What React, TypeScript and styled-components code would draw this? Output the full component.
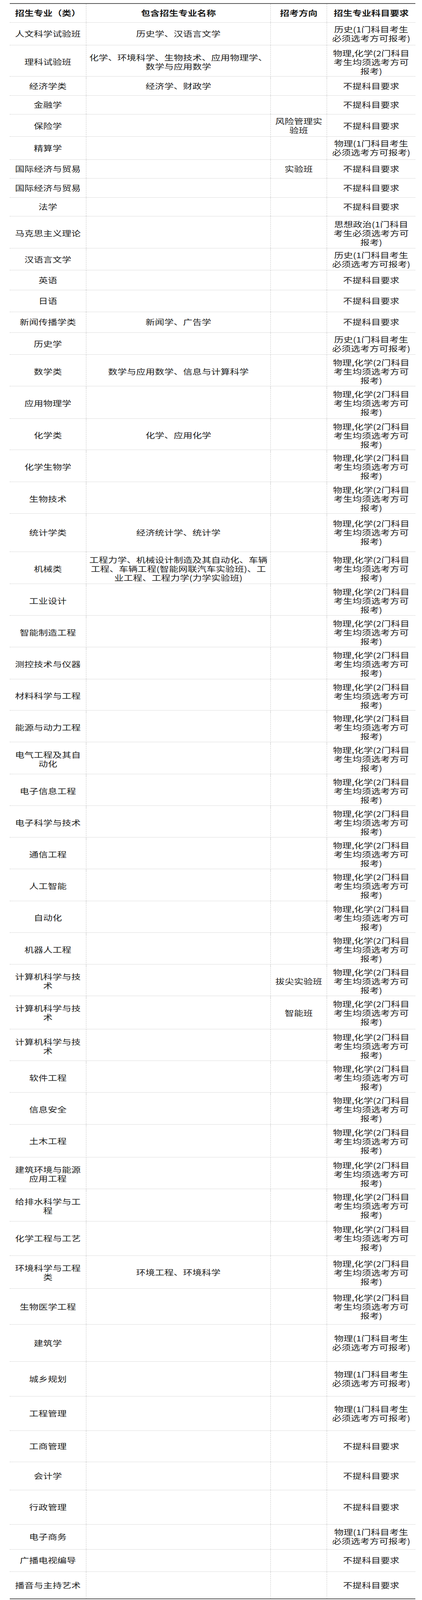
import React from 'react'
import styled, { createGlobalStyle } from 'styled-components'

const GlobalStyle = createGlobalStyle`
  html, body {
    margin: 0;
    padding: 0;
    background: #fff;
  }
  body {
    font-family: "Noto Sans CJK SC", "Noto Sans", sans-serif;
    color: #222;
  }
`

const Page = styled.div`
  padding: 8px 17px 0 25px;
`

const Sheet = styled.div`
  width: 1038px;
  border-top: 2px solid #555;
  border-bottom: 2px solid #555;
  font-size: 24px;
  line-height: 1.2;
  text-align: center;
`

const Row = styled.div<{ $h: number }>`
  display: grid;
  grid-template-columns: 195px 472px 144px 227px;
  height: ${p => p.$h}px;
  box-sizing: border-box;
  border-bottom: 1px dotted #bdbdbd;
  &:last-child {
    border-bottom: none;
  }
`

const Cell = styled.div<{ $head?: boolean }>`
  display: flex;
  align-items: center;
  justify-content: center;
  min-width: 0;
  padding: 0 8px;
  word-break: break-all;
  font-weight: ${p => (p.$head ? 700 : 400)};
  color: ${p => (p.$head ? '#1a1a1a' : '#222')};
  &:not(:first-child) {
    border-left: 1px dashed #c4c4c4;
  }
  &:nth-child(2) {
    padding: 0 6px;
  }
  &:nth-child(4) {
    padding: 0 11px;
  }
`

/* the sheet is printed a little flattened, glyphs included */
const Text = styled.span`
  display: inline-block;
  transform: scaleY(0.8);
`

const NONE = '不提科目要求'
const HIST = '历史(1门科目考生必须选考方可报考)'
const PHY = '物理(1门科目考生必须选考方可报考)'
const PC = '物理,化学(2门科目考生均须选考方可报考)'
const POL = '思想政治(1门科目考生必须选考方可报考)'

type Major = [string, string, string, string, number]

const majors: Major[] = [
  ['人文科学试验班', '历史学、汉语言文学', '', HIST, 57.6],
  ['理科试验班', '化学、环境科学、生物技术、应用物理学、数学与应用数学', '', PC, 80.8],
  ['经济学类', '经济学、财政学', '', NONE, 48.8],
  ['金融学', '', '', NONE, 48],
  ['保险学', '', '风险管理实验班', NONE, 56.8],
  ['精算学', '', '', PHY, 59.2],
  ['国际经济与贸易', '', '实验班', NONE, 48],
  ['国际经济与贸易', '', '', NONE, 48.8],
  ['法学', '', '', NONE, 48],
  ['马克思主义理论', '', '', POL, 81.6],
  ['汉语言文学', '', '', HIST, 56.8],
  ['英语', '', '', NONE, 50.4],
  ['日语', '', '', NONE, 56],
  ['新闻传播学类', '新闻学、广告学', '', NONE, 52.8],
  ['历史学', '', '', HIST, 56.8],
  ['数学类', '数学与应用数学、信息与计算科学', '', PC, 80.8],
  ['应用物理学', '', '', PC, 82.4],
  ['化学类', '化学、应用化学', '', PC, 80.8],
  ['化学生物学', '', '', PC, 81.6],
  ['生物技术', '', '', PC, 80.8],
  ['统计学类', '经济统计学、统计学', '', PC, 98.4],
  ['机械类', '工程力学、机械设计制造及其自动化、车辆工程、车辆工程(智能网联汽车实验班)、工业工程、工程力学(力学实验班)', '', PC, 81.6],
  ['工业设计', '', '', PC, 81.6],
  ['智能制造工程', '', '', PC, 80.8],
  ['测控技术与仪器', '', '', PC, 81.6],
  ['材料科学与工程', '', '', PC, 80.8],
  ['能源与动力工程', '', '', PC, 80.8],
  ['电气工程及其自动化', '', '', PC, 81.6],
  ['电子信息工程', '', '', PC, 81.6],
  ['电子科学与技术', '', '', PC, 80.8],
  ['通信工程', '', '', PC, 80.8],
  ['人工智能', '', '', PC, 81.6],
  ['自动化', '', '', PC, 81.6],
  ['机器人工程', '', '', PC, 80.8],
  ['计算机科学与技术', '', '拔尖实验班', PC, 80.8],
  ['计算机科学与技术', '', '智能班', PC, 85.6],
  ['计算机科学与技术', '', '', PC, 80.8],
  ['软件工程', '', '', PC, 80.8],
  ['信息安全', '', '', PC, 81.6],
  ['土木工程', '', '', PC, 84],
  ['建筑环境与能源应用工程', '', '', PC, 81.6],
  ['给排水科学与工程', '', '', PC, 82.4],
  ['化学工程与工艺', '', '', PC, 88],
  ['环境科学与工程类', '环境工程、环境科学', '', PC, 84.8],
  ['生物医学工程', '', '', PC, 92],
  ['建筑学', '', '', PHY, 94.4],
  ['城乡规划', '', '', PHY, 89.6],
  ['工程管理', '', '', PHY, 87.2],
  ['工商管理', '', '', NONE, 80.8],
  ['会计学', '', '', NONE, 71.2],
  ['行政管理', '', '', NONE, 88],
  ['电子商务', '', '', PHY, 64],
  ['广播电视编导', '', '', NONE, 57.6],
  ['播音与主持艺术', '', '', NONE, 68],
]

const headers = ['招生专业（类）', '包含招生专业名称', '招考方向', '招生专业科目要求']

export default function App() {
  return (
    <Page>
      <GlobalStyle />
      <Sheet>
        <Row $h={48}>
          {headers.map(h => (
            <Cell key={h} $head>
              <Text>{h}</Text>
            </Cell>
          ))}
        </Row>
        {majors.map(([name, subs, track, req, h], i) => (
          <Row key={i} $h={h}>
            <Cell><Text>{name}</Text></Cell>
            <Cell><Text>{subs}</Text></Cell>
            <Cell><Text>{track}</Text></Cell>
            <Cell><Text>{req}</Text></Cell>
          </Row>
        ))}
      </Sheet>
    </Page>
  )
}
